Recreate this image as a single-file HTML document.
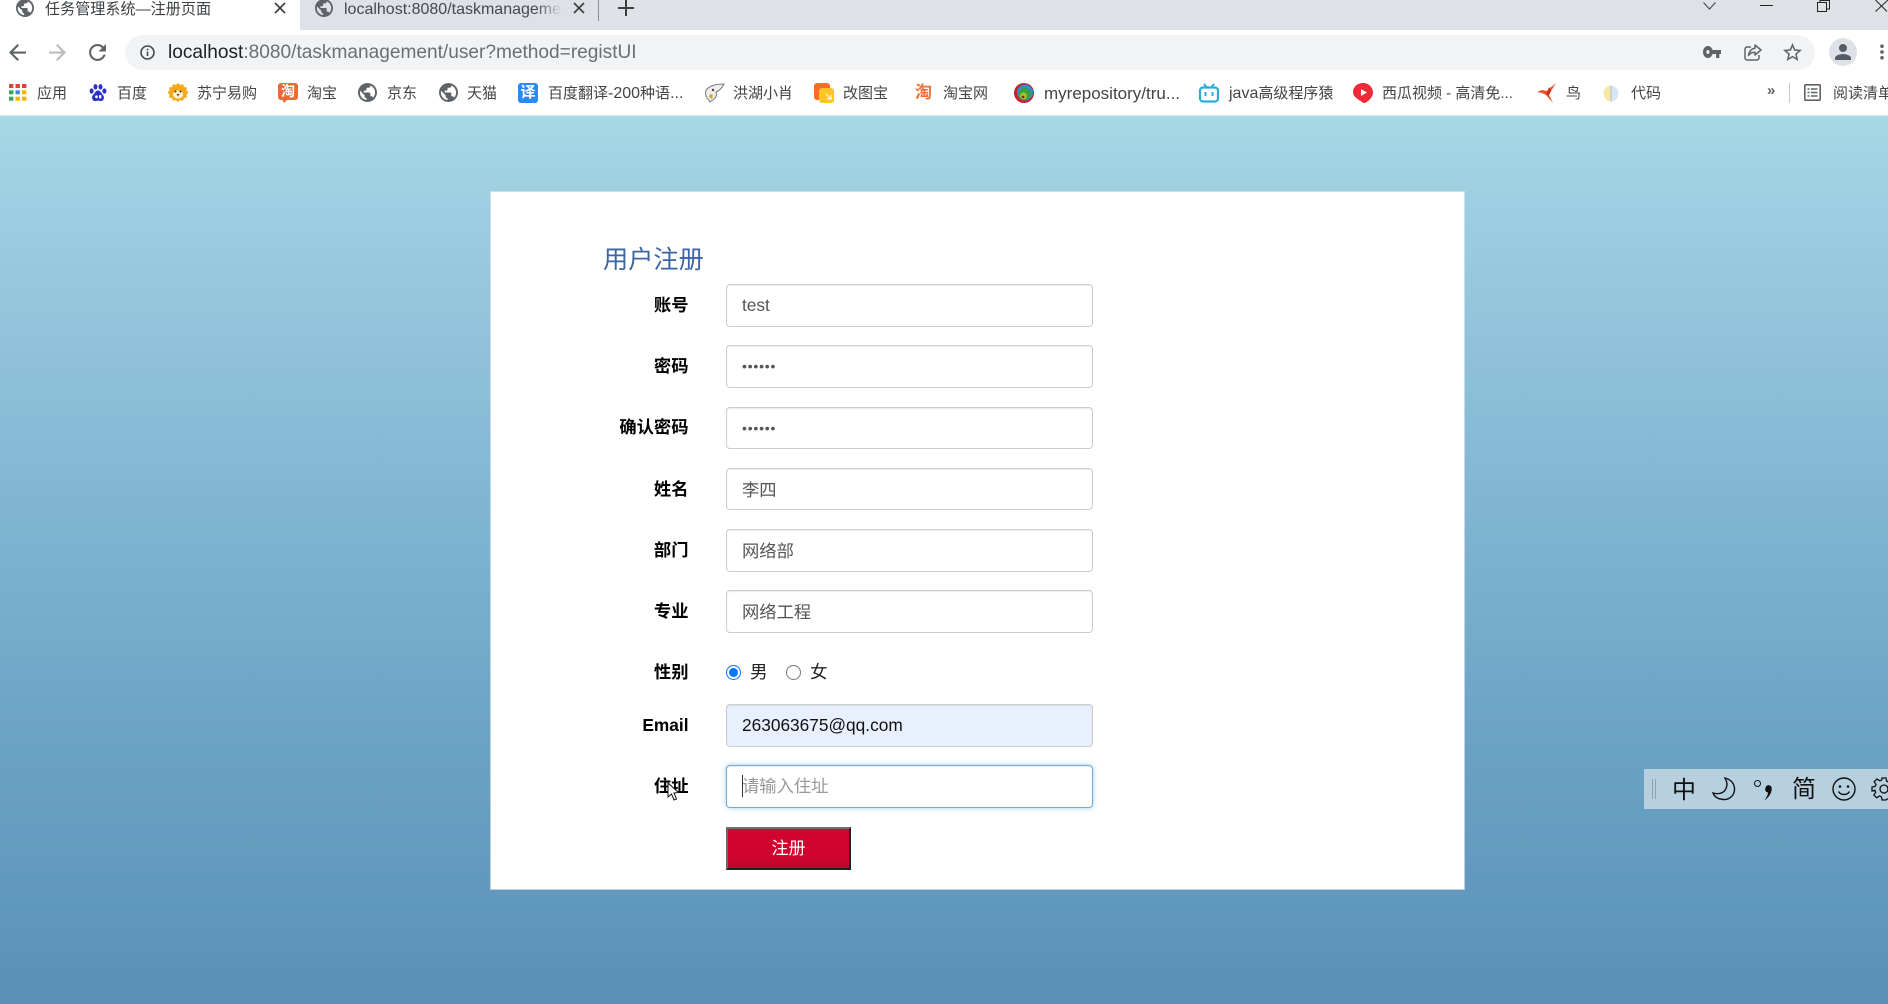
<!DOCTYPE html>
<html lang="zh-CN">
<head>
<meta charset="utf-8">
<title>任务管理系统—注册页面</title>
<style>
*{box-sizing:border-box}
html,body{margin:0;padding:0;width:1888px;height:1004px;overflow:hidden;background:#fff;font-family:"Liberation Sans","Noto Sans CJK SC",sans-serif}
#all{position:absolute;left:0;top:0;width:1888px;height:1004px;overflow:hidden;filter:blur(.3px)}
.a{position:absolute}
.t{position:absolute;white-space:nowrap;line-height:20px;height:20px}
svg{position:absolute;display:block;overflow:visible}
#tabs{left:0;top:0;width:1888px;height:30px;background:#dee1e6}
#tab1{left:0;top:0;width:300px;height:30px;background:#fff}
#tab1c{left:300px;top:20px;width:12px;height:10px;background:#dee1e6;border-bottom-left-radius:10px}
#omni{left:125px;top:35px;width:1690px;height:35px;border-radius:18px;background:#f1f3f4}
#page{left:0;top:116px;width:1888px;height:888px;background:linear-gradient(180deg,#a6d8e5 0%,#9ccce0 12%,#7fb5d1 45%,#6aa2c5 72%,#5a90b7 100%)}
#barline{left:0;top:115px;width:1888px;height:1px;background:#d5e3ea}
#card{left:491px;top:192px;width:973px;height:697px;background:#fff;box-shadow:0 0 0 1px rgba(225,232,238,.7)}
.b{font-size:15px;color:#444}
.l{position:absolute;right:1199.5px;white-space:nowrap;font-size:17.3px;font-weight:700;color:#000;line-height:24px;height:24px;text-align:right}
input.f{position:absolute;left:726px;width:367px;height:43px;border:1px solid #ccc;border-radius:4px;padding:0 15px;font:17.3px "Liberation Sans","Noto Sans CJK SC",sans-serif;color:#555;background:#fff;box-shadow:inset 0 1px 1px rgba(0,0,0,.075);outline:none}
input.f::placeholder{color:#999;opacity:1}
input.r{position:absolute;margin:0;width:15px;height:15px;top:665px;accent-color:#0075ff}
#btn{position:absolute;left:726px;top:827px;width:125px;height:43px;background:linear-gradient(180deg,#d2042d 0%,#d0042e 75%,#b9062c 100%);border:2px solid;border-color:#7b6a70 #222 #222 #6a6a6a;color:#fff;font:17px "Liberation Sans","Noto Sans CJK SC",sans-serif;padding:0 0 4px}
#ime{left:1644px;top:769px;width:244px;height:40px;background:#b7d0df;overflow:hidden}
</style>
</head>
<body>
<svg width="0" height="0" style="position:absolute">
<symbol id="globe" viewBox="2 2 20 20"><path fill="#5f6368" d="M12 2C6.48 2 2 6.48 2 12s4.48 10 10 10 10-4.48 10-10S17.52 2 12 2zm-1 17.93c-3.95-.49-7-3.85-7-7.93 0-.62.08-1.21.21-1.79L9 15v1c0 1.1.9 2 2 2v1.93zm6.9-2.54c-.26-.81-1-1.39-1.9-1.39h-1v-3c0-.55-.45-1-1-1H8v-2h2c.55 0 1-.45 1-1V7h2c1.1 0 2-.9 2-2v-.41c2.93 1.19 5 4.06 5 7.41 0 2.08-.8 3.97-2.1 5.39z"/></symbol>
</svg>
<div id="all">

<!-- tab strip -->
<div class="a" id="tabs"></div>
<div class="a" id="tab1"></div>
<div class="a" id="tab1c"></div>
<svg style="left:16px;top:-1px" width="18" height="18"><use href="#globe"/></svg>
<div class="t" style="left:45px;top:0;font-size:15.1px;color:#3c4043">任务管理系统—注册页面</div>
<svg style="left:274px;top:2px" width="12" height="12" viewBox="0 0 12 12"><path d="M1 1l10 10M11 1L1 11" stroke="#3c4043" stroke-width="1.7"/></svg>
<svg style="left:315px;top:-1px" width="18" height="18"><use href="#globe"/></svg>
<div class="t" style="left:344px;top:0;width:218px;overflow:hidden;font-size:16px;color:#45494e;-webkit-mask-image:linear-gradient(90deg,#000 88%,transparent);mask-image:linear-gradient(90deg,#000 88%,transparent)">localhost:8080/taskmanagement/user</div>
<svg style="left:573px;top:2px" width="12" height="12" viewBox="0 0 12 12"><path d="M1 1l10 10M11 1L1 11" stroke="#3c4043" stroke-width="1.7"/></svg>
<div class="a" style="left:598px;top:0;width:1px;height:21px;background:#8a8d91"></div>
<svg style="left:618px;top:0" width="16" height="16" viewBox="0 0 16 16"><path d="M8 0v16M0 8h16" stroke="#3c4043" stroke-width="2"/></svg>
<svg style="left:1703px;top:2px" width="13" height="8" viewBox="0 0 13 8"><path d="M.5 .5L6.5 7 12.5 .5" fill="none" stroke="#3c4043" stroke-width="1"/></svg>
<div class="a" style="left:1760px;top:5px;width:13px;height:1px;background:#222"></div>
<svg style="left:1817px;top:0" width="13" height="12" viewBox="0 0 13 12"><path d="M.5 2.5h9v9h-9zM3 2.5V.5h9.5v8.5h-3" fill="none" stroke="#222" stroke-width="1"/></svg>
<svg style="left:1875px;top:0" width="13" height="12" viewBox="0 0 13 12"><path d="M.5 0L12 11.5M13 0L.5 11.5" fill="none" stroke="#222" stroke-width="1"/></svg>

<!-- toolbar -->
<svg style="left:9px;top:44px" width="17" height="17" viewBox="4 4 16 16"><path fill="#5f6368" d="M20 11H7.83l5.59-5.59L12 4l-8 8 8 8 1.41-1.41L7.83 13H20v-2z"/></svg>
<svg style="left:49px;top:44px;transform:scaleX(-1)" width="17" height="17" viewBox="4 4 16 16"><path fill="#babcbe" d="M20 11H7.83l5.59-5.59L12 4l-8 8 8 8 1.41-1.41L7.83 13H20v-2z"/></svg>
<svg style="left:88px;top:43px" width="19" height="19" viewBox="3 3 18 18"><path fill="#5f6368" d="M17.65 6.35C16.2 4.9 14.21 4 12 4c-4.42 0-7.99 3.58-7.99 8s3.57 8 7.99 8c3.73 0 6.84-2.55 7.73-6h-2.08c-.82 2.33-3.04 4-5.65 4-3.31 0-6-2.69-6-6s2.69-6 6-6c1.66 0 3.14.69 4.22 1.78L13 11h7V4l-2.35 2.35z"/></svg>
<div class="a" id="omni"></div>
<svg style="left:140px;top:45px" width="15" height="15" viewBox="0 0 15 15"><circle cx="7.5" cy="7.5" r="6.5" fill="none" stroke="#45494e" stroke-width="1.6"/><path d="M7.5 6.6v4.4M7.5 3.8v1.6" stroke="#45494e" stroke-width="1.6"/></svg>
<div class="t" style="left:168px;top:43px;font-size:19.1px;color:#6b6f73"><span style="color:#202124">localhost</span>:8080/taskmanagement/user?method=registUI</div>
<svg style="left:1703px;top:46px" width="18" height="12" viewBox="1 6 22 12" preserveAspectRatio="none"><path fill="#5f6368" d="M12.65 10C11.83 7.67 9.61 6 7 6c-3.31 0-6 2.69-6 6s2.69 6 6 6c2.61 0 4.83-1.67 5.65-4H17v4h4v-4h2v-4H12.65zM7 14c-1.1 0-2-.9-2-2s.9-2 2-2 2 .9 2 2-.9 2-2 2z"/></svg>
<svg style="left:1744px;top:44px" width="18" height="17" viewBox="0 0 18 17"><path d="M7 3H3.2C2 3 1 4 1 5.2v8.6C1 15 2 16 3.200 16h9.600C14 16 15 15 15 13.800V11" fill="none" stroke="#5f6368" stroke-width="1.500"/><path d="M11 1l6 5-6 5V8.200C8 8.200 6 9 4.500 11.500 5 7.500 7.500 4.500 11 4.200z" fill="none" stroke="#5f6368" stroke-width="1.500" stroke-linejoin="round"/></svg>
<svg style="left:1783px;top:43px" width="19" height="18" viewBox="2 2 20 19"><path fill="#5f6368" d="M22 9.240l-7.190-.62L12 2 9.190 8.630 2 9.240l5.460 4.730L5.820 21 12 17.270 18.180 21l-1.630-7.030L22 9.240zM12 15.400l-3.760 2.270 1-4.280-3.320-2.880 4.380-.38L12 6.100l1.710 4.040 4.380.38-3.320 2.880 1 4.280L12 15.400z"/></svg>
<div class="a" style="left:1829px;top:38px;width:28px;height:28px;border-radius:50%;background:#dee1e6"></div>
<svg style="left:1834px;top:43px" width="18" height="18" viewBox="3 3 18 18"><path fill="#565c66" d="M12 12c2.210 0 4-1.790 4-4s-1.790-4-4-4-4 1.790-4 4 1.790 4 4 4zm0 2c-2.670 0-8 1.340-8 4v2h16v-2c0-2.660-5.330-4-8-4z"/></svg>
<svg style="left:1879px;top:44px" width="6" height="16" viewBox="0 0 6 16"><circle cx="3" cy="2.200" r="1.800" fill="#5f6368"/><circle cx="3" cy="8" r="1.800" fill="#5f6368"/><circle cx="3" cy="13.800" r="1.800" fill="#5f6368"/></svg>

<!-- bookmarks bar -->
<svg style="left:9px;top:84px" width="18" height="17" viewBox="0 0 18 17">
<g fill="#db4437"><rect x="0" y="0" width="4.400" height="4"/><rect x="6.500" y="0" width="4.400" height="4"/><rect x="13" y="0" width="4.400" height="4"/></g>
<rect x="0" y="6.300" width="4.400" height="4" fill="#34a853"/><rect x="6.500" y="6.300" width="4.400" height="4" fill="#4285f4"/><rect x="13" y="6.300" width="4.400" height="4" fill="#f4b400"/>
<rect x="0" y="12.700" width="4.400" height="4" fill="#34a853"/><rect x="6.500" y="12.700" width="4.400" height="4" fill="#f4b400"/><rect x="13" y="12.700" width="4.400" height="4" fill="#f4b400"/>
</svg>
<div class="t b" style="left:37px;top:84px">应用</div>

<svg style="left:89px;top:84px" width="18" height="18" viewBox="0 0 18 18" fill="#2932c8"><ellipse cx="2.600" cy="7" rx="2" ry="2.600"/><ellipse cx="6.500" cy="2.800" rx="2" ry="2.700"/><ellipse cx="11.500" cy="2.800" rx="2" ry="2.700"/><ellipse cx="15.400" cy="7" rx="2" ry="2.600"/><path d="M9 6.500c-2.500 0-3 2.500-5 4.500-1.800 2-1 6 2 6 1.200 0 2-.4 3-.4s1.800.4 3 .4c3 0 3.800-4 2-6-2-2-2.500-4.500-5-4.500z"/><circle cx="7.500" cy="12.800" r="1.400" fill="#fff"/><rect x="10" y="11" width="2.400" height="3.500" rx="1" fill="#fff"/></svg>
<div class="t b" style="left:117px;top:84px">百度</div>

<svg style="left:168px;top:83px" width="20" height="20" viewBox="0 0 20 20"><path fill="#f6a91c" d="M10 0l2.200 2 2.800-.9 1 2.800 2.900.6-.4 2.900 2 2.100-2 2.100.4 2.900-2.900.6-1 2.800-2.800-.9-2.200 2-2.200-2-2.800.9-1-2.800-2.900-.6.4-2.900-2-2.100 2-2.100-.4-2.900 2.900-.6 1-2.800 2.800.9z"/><ellipse cx="10" cy="11.500" rx="5" ry="4" fill="#fff3d0"/><circle cx="7.500" cy="8.500" r="1" fill="#333"/><circle cx="12.500" cy="8.500" r="1" fill="#333"/><path d="M8.500 11h3l-1.500 2.500z" fill="#7a3b10"/></svg>
<div class="t b" style="left:197px;top:84px">苏宁易购</div>

<div class="a" style="left:278px;top:83px;width:20px;height:17px;border-radius:3px;background:#ee6a34;color:#fff;font-size:14px;font-weight:700;line-height:17px;text-align:center">淘</div>
<svg style="left:282px;top:99px" width="6" height="4" viewBox="0 0 6 4"><path d="M0 0h6L2 4z" fill="#ee6a34"/></svg>
<div class="t b" style="left:307px;top:84px">淘宝</div>

<svg style="left:358px;top:83px" width="19" height="19"><use href="#globe"/></svg>
<div class="t b" style="left:387px;top:84px">京东</div>

<svg style="left:439px;top:83px" width="19" height="19"><use href="#globe"/></svg>
<div class="t b" style="left:467px;top:84px">天猫</div>

<div class="a" style="left:518px;top:83px;width:20px;height:20px;border-radius:3px;background:#2b8af0;color:#fff;font-size:15px;font-weight:700;line-height:20px;text-align:center">译</div>
<div class="t b" style="left:548px;top:84px">百度翻译<span style="font-size:16px">-200</span>种语<span style="font-size:16px">...</span></div>

<svg style="left:704px;top:83px" width="21" height="20" viewBox="0 0 21 20"><path d="M20 1C14 1 7 2 3 6c-2 2-2 6 0 9l3 4 3-2c3-2 4-5 3-8 3-1 6-4 8-8z" fill="#eee" stroke="#777" stroke-width="1"/><path d="M6 11l3 1-1 4-3-2z" fill="#d9a520"/><circle cx="9" cy="7" r="1.200" fill="#633"/></svg>
<div class="t b" style="left:733px;top:84px">洪湖小肖</div>

<div class="a" style="left:814px;top:83px;width:16px;height:17px;border-radius:3px;background:#ff6a26"></div>
<div class="a" style="left:819px;top:88px;width:15px;height:15px;border-radius:3px;background:#ffc426"></div>
<svg style="left:826px;top:94px" width="6" height="6" viewBox="0 0 6 6"><path d="M0 0l5 5M5 1v4H1" fill="none" stroke="#fff" stroke-width="1"/></svg>
<div class="t b" style="left:843px;top:84px">改图宝</div>

<div class="a" style="left:914px;top:83px;width:19px;height:20px;color:#f0702c;font-size:17px;font-weight:700;line-height:20px;text-align:center">淘</div>
<div class="t b" style="left:943px;top:84px">淘宝网</div>

<svg style="left:1014px;top:83px" width="20" height="20" viewBox="0 0 20 20"><circle cx="10" cy="10" r="10" fill="#c8202e"/><circle cx="11" cy="9.500" r="8" fill="#2a8fd0"/><circle cx="10.500" cy="11" r="6" fill="#3f9d3a"/><circle cx="9.500" cy="13" r="3.500" fill="#a8c02c"/><circle cx="9" cy="14" r="1.400" fill="#7a2a20"/></svg>
<div class="t b" style="left:1044px;top:84px;font-size:17px">myrepository/tru...</div>

<svg style="left:1199px;top:83px" width="20" height="20" viewBox="0 0 20 20"><rect x="1" y="4.500" width="18" height="14" rx="3" fill="none" stroke="#27aed8" stroke-width="2.200"/><path d="M5 1l3 3.500M15 1l-3 3.500" stroke="#27aed8" stroke-width="2"/><rect x="5.500" y="9" width="2" height="4" fill="#27aed8"/><rect x="12.500" y="9" width="2" height="4" fill="#27aed8"/></svg>
<div class="t b" style="left:1229px;top:84px"><span style="font-size:16px">java</span>高级程序猿</div>

<svg style="left:1353px;top:83px" width="20" height="20" viewBox="0 0 20 20"><path d="M10 0c5.500 0 10 4 10 9.500 0 4.500-4 8-7 10-1.500 1-3 .5-4-.5C5.500 16.500 0 14 0 9 0 4 4.500 0 10 0z" fill="#ee2a36"/><path d="M8 6l6 3.500L8 13z" fill="#fff"/></svg>
<div class="t b" style="left:1382px;top:84px">西瓜视频 - 高清免...</div>

<svg style="left:1537px;top:83px" width="20" height="20" viewBox="0 0 20 20"><path d="M19 0l-5 8-2 4 4 8-7-8-4-2-5-1 5-2 5 1 3-3z" fill="#e8502a"/><path d="M9 12l3-8 2 4-2 4z" fill="#c63218"/></svg>
<div class="t b" style="left:1566px;top:84px">鸟</div>

<svg style="left:1603px;top:85px" width="16" height="17" viewBox="0 0 16 17"><path d="M8 .5A7.500 8 0 0 0 8 16.500z" fill="#f6e6a8"/><path d="M8 .5A7.500 8 0 0 1 8 16.500z" fill="#d6e6f2"/><path d="M8 .5v16" stroke="#bbb" stroke-width="1"/></svg>
<div class="t b" style="left:1631px;top:84px">代码</div>

<div class="t" style="left:1767px;top:81px;font-size:15px;font-weight:700;color:#5f6368">»</div>
<div class="a" style="left:1789px;top:83px;width:1px;height:20px;background:#c8cbce"></div>
<svg style="left:1804px;top:84px" width="17" height="17" viewBox="0 0 17 17"><rect x=".8" y=".8" width="15.400" height="15.400" rx="1" fill="none" stroke="#5f6368" stroke-width="1.600"/><path d="M3.500 5h2M7 5h6.500M3.500 8.500h2M7 8.500h6.500M3.500 12h2M7 12h6.500" stroke="#5f6368" stroke-width="1.400"/></svg>
<div class="t b" style="left:1833px;top:84px;width:55px;overflow:hidden">阅读清单</div>
<div class="a" id="barline"></div>

<!-- page -->
<div class="a" id="page"></div>
<div class="a" id="card"></div>

<div class="t" style="left:603px;top:245px;height:30px;line-height:30px;font-size:25.2px;color:#3d64a3">用户注册</div>

<form>
<label class="l" style="top:293px">账号</label>
<input class="f" style="top:284px" type="text" value="test">
<label class="l" style="top:354px">密码</label>
<input class="f" style="top:345px;font-size:14px;letter-spacing:.8px;padding-bottom:1px" type="password" value="123456">
<label class="l" style="top:415px">确认密码</label>
<input class="f" style="top:407px;height:42px;font-size:14px;letter-spacing:.8px" type="password" value="123456">
<label class="l" style="top:477px">姓名</label>
<input class="f" style="top:468px;height:42px;padding-bottom:1px" type="text" value="李四">
<label class="l" style="top:538px">部门</label>
<input class="f" style="top:529px;padding-bottom:2px" type="text" value="网络部">
<label class="l" style="top:599px">专业</label>
<input class="f" style="top:590px;padding-bottom:2px" type="text" value="网络工程">
<label class="l" style="top:660px">性别</label>
<input class="r" style="left:726px" type="radio" name="s" checked>
<div class="t" style="left:750px;top:660px;height:24px;line-height:24px;font-size:17.6px;color:#222">男</div>
<input class="r" style="left:786px" type="radio" name="s">
<div class="t" style="left:810px;top:660px;height:24px;line-height:24px;font-size:17.6px;color:#222">女</div>
<label class="l" style="top:713px">Email</label>
<input class="f" style="top:704px;background:#e8f0fe;color:#111" type="text" value="263063675@qq.com">
<label class="l" style="top:774px">住址</label>
<input class="f" style="top:765px;border-color:#73a9d6;box-shadow:inset 0 1px 1px rgba(0,0,0,.075),0 0 6px rgba(102,175,233,.6)" type="text" placeholder="请输入住址">
<div class="a" style="left:742px;top:775px;width:1px;height:22px;background:#333"></div>
<button id="btn" type="button">注册</button>
</form>

<svg style="left:667px;top:782px" width="12" height="19" viewBox="0 0 12 19"><path d="M1 1v14l3.500-3 2.500 6 2.500-1-2.500-6 4.500-.5z" fill="#fff" stroke="#111" stroke-width="1"/></svg>

<!-- IME bar -->
<div class="a" id="ime">
<div class="a" style="left:8px;top:10px;width:1px;height:20px;background:#8da2ae"></div>
<div class="a" style="left:11px;top:10px;width:1px;height:20px;background:#8da2ae"></div>
<div class="t" style="left:28px;top:8px;height:28px;line-height:28px;font-size:24px;color:#111">中</div>
<svg style="left:68px;top:8px" width="24" height="24" viewBox="0 0 24 24"><path d="M13 1c6 1.500 10 6 9.500 12C22 19 17 23 11 22.500 6 22 2.500 20 1 16c5 1.500 10 .5 12.500-3.500C15.500 9 15.500 5 13 1z" fill="none" stroke="#111" stroke-width="1.400"/></svg>
<div class="a" style="left:110px;top:11px;width:7px;height:7px;border:1.300px solid #111;border-radius:50%"></div>
<svg style="left:119px;top:17px" width="11" height="15" viewBox="0 0 10 14"><path d="M3 0a3 3 0 0 1 5 2.500C8 7 5 11 1 13.500 3.500 10.500 4.500 8 4.500 6 2 6 1 3 3 0z" fill="#111"/></svg>
<div class="t" style="left:148px;top:7px;height:28px;line-height:28px;font-size:24px;color:#111">简</div>
<svg style="left:188px;top:8px" width="24" height="24" viewBox="0 0 24 24"><circle cx="12" cy="12" r="11" fill="none" stroke="#111" stroke-width="1.400"/><circle cx="8" cy="9.500" r="1.300" fill="#111"/><circle cx="16" cy="9.500" r="1.300" fill="#111"/><path d="M6.500 14.500c2.500 4 8.500 4 11 0" fill="none" stroke="#111" stroke-width="1.400"/></svg>
<svg style="left:228px;top:8px" width="24" height="24" viewBox="0 0 24 24"><circle cx="12" cy="12" r="4" fill="none" stroke="#111" stroke-width="1.300"/><path d="M10 1h4l.6 3.200 2 .8L19.300 3.200l2.800 2.800-1.800 2.700.8 2 3.100.6v4l-3.200.6-.8 2 1.800 2.700-2.800 2.800-2.700-1.800-2 .8L14 23h-4l-.6-3.200-2-.8-2.700 1.800-2.800-2.800 1.800-2.700-.8-2L0 14v-4l3.200-.6.800-2L2.200 4.700 5 2l2.700 1.800 2-.8z" fill="none" stroke="#111" stroke-width="1.300"/></svg>
</div>
</div>
</body>
</html>
